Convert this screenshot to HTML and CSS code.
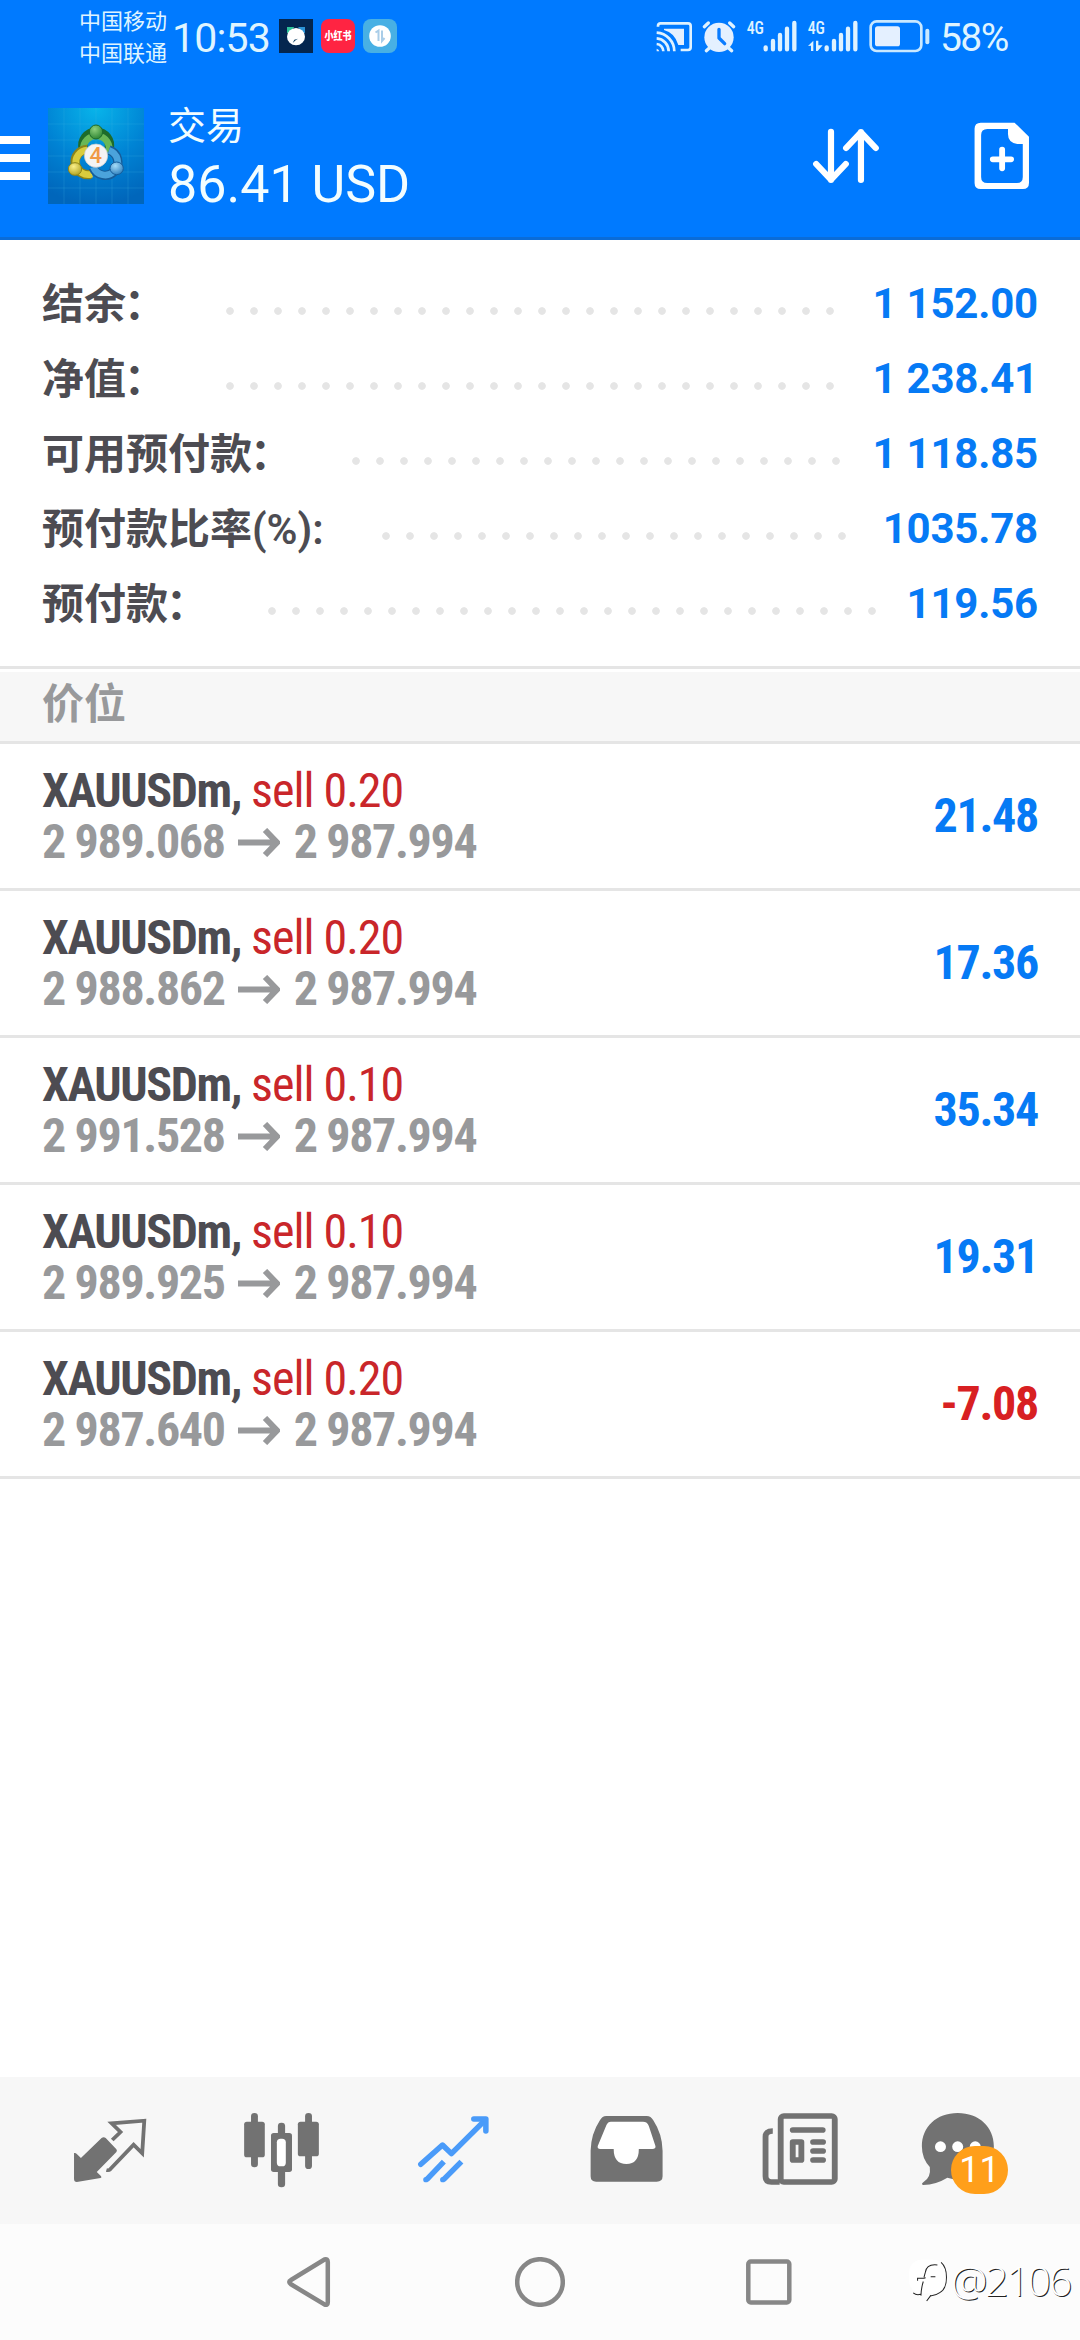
FILE: index.html
```html
<!DOCTYPE html>
<html lang="zh-CN">
<head>
<meta charset="utf-8">
<title>交易</title>
<link rel="stylesheet" href="styles.css">
</head>
<body>
<div class="screen">
  <header class="header">
    <div class="status">
      <div class="carriers"><div>中国移动</div><div>中国联通</div></div>
      <div class="clock">10:53</div>
      <div class="apps">
        <svg class="app" viewBox="27 27 102 102" preserveAspectRatio="none">
          <rect x="27" y="27" width="102" height="102" fill="#04264f"/>
          <path d="M51 51h22l-15 18h-7z" fill="#2fc39b"/><path d="M105 51H84l15 18h6z" fill="#2b93d6"/>
          <ellipse cx="78" cy="80" rx="27" ry="26" fill="#fff"/>
          <path d="M84 86l-7 5-9 8 5-10z" fill="#0b3d63"/>
        </svg>
        <svg class="app" viewBox="0 0 34 34">
          <rect width="34" height="34" rx="8" fill="#ff2442"/>
          <text x="17" y="21" text-anchor="middle" textLength="27" lengthAdjust="spacingAndGlyphs" class="app-label">小红书</text>
        </svg>
        <svg class="app" viewBox="0 0 34 34">
          <rect width="34" height="34" rx="8" fill="#48b0e4"/>
          <circle cx="17" cy="17" r="10.8" fill="#fff"/>
          <path d="M12.5 13.5l3-2V22M19 11.5V22l2.5-3" fill="none" stroke="#a9cde8" stroke-width="2"/>
        </svg>
      </div>
      <svg class="indicators" viewBox="0 0 855 150">
        <g fill="none" stroke="#dff2ff" stroke-width="8">
          <path d="M24 50v-2q0-8 8-8h82q8 0 8 8v64q0 8-8 8H92"/>
          <path d="M20 68a56 56 0 0 1 53 56M20 85a39 39 0 0 1 36 39M20 102a22 22 0 0 1 20 22"/>
        </g>
        <path d="M42 56h60v49H85Q74 68 42 60zM20 116a10 10 0 0 1 8 8h-8z" fill="#e4f0ff"/>
        <circle cx="207" cy="82" r="44" fill="#e4f0ff"/>
        <path d="M163 50l12-11M251 50l-12-11M169 122l10-9M245 122l-10-9" stroke="#dff2ff" stroke-width="10" stroke-linecap="round"/>
        <path d="M207 58v26l17 17" fill="none" stroke="#0a7cff" stroke-width="10" stroke-linecap="round" stroke-linejoin="round"/>
        <text x="290" y="73" class="net" textLength="52" lengthAdjust="spacingAndGlyphs">4G</text>
        <text x="473" y="73" class="net" textLength="52" lengthAdjust="spacingAndGlyphs">4G</text>
        <g stroke="#dff2ff" stroke-width="13" stroke-linecap="round">
          <path d="M347 112v6M369 93v25M390 75v43M411 56v62M433 39v79"/>
          <path d="M530 112v6M552 93v25M573 75v43M594 56v62M616 39v79"/>
        </g>
        <path d="M474 108l16-16v31h-7v-16zM498 92h7v14h13l-15 17h-5z" fill="#dff2ff"/>
        <rect x="662" y="34" width="152" height="89" rx="18" fill="none" stroke="#c9e8ff" stroke-width="8"/>
        <rect x="675" y="49" width="75" height="60" rx="8" fill="#e4f0ff"/>
        <path d="M832 62v35" stroke="#c9e8ff" stroke-width="12" stroke-linecap="round"/>
      </svg>
      <div class="battery-level">58%</div>
    </div>
    <div class="toolbar">
      <div class="menu"><i></i><i></i><i></i></div>
      <svg class="logo" viewBox="24 24 288 288">
        <defs>
          <radialGradient id="sky" cx=".5" cy="0" r="1"><stop offset="0" stop-color="#08b4ea"/><stop offset=".55" stop-color="#0083d4"/><stop offset="1" stop-color="#0066bb"/></radialGradient>
          <radialGradient id="green" cx=".4" cy=".3" r=".8"><stop offset="0" stop-color="#8ed07c"/><stop offset="1" stop-color="#237d2c"/></radialGradient>
          <radialGradient id="gold" cx=".4" cy=".3" r=".8"><stop offset="0" stop-color="#fbf08a"/><stop offset="1" stop-color="#a99b16"/></radialGradient>
          <radialGradient id="azure" cx=".4" cy=".3" r=".8"><stop offset="0" stop-color="#a5dcf8"/><stop offset="1" stop-color="#2377b8"/></radialGradient>
        </defs>
        <rect x="24" y="24" width="288" height="288" fill="url(#sky)"/>
        <path d="M72 24v288M120 24v288M168 24v288M216 24v288M264 24v288M24 72h288M24 120h288M24 168h288M24 216h288M24 264h288" stroke="#45b4ea" stroke-opacity=".22" stroke-width="3"/>
        <path d="M130 147a40 40 0 1 1 77 0" fill="none" stroke="#1d6b2b" stroke-width="28"/>
        <path d="M130 150a39 39 0 1 1 76 8" fill="none" stroke="#69b756" stroke-width="20"/>
        <path d="M142 148a38 38 0 1 0 10 75" fill="none" stroke="#8c8419" stroke-width="28"/>
        <path d="M142 150a37 37 0 1 0 14 72" fill="none" stroke="#d9cc3d" stroke-width="20"/>
        <path d="M207 150a39 39 0 1 1-48 53" fill="none" stroke="#165d9a" stroke-width="28"/>
        <path d="M207 151a38 38 0 1 1-47 50" fill="none" stroke="#4ba3dc" stroke-width="20"/>
        <ellipse cx="168" cy="96" rx="20" ry="21" fill="url(#green)" stroke="#1d6b2b" stroke-width="3"/>
        <ellipse cx="105" cy="207" rx="20" ry="19" fill="url(#gold)" stroke="#8c8419" stroke-width="3"/>
        <ellipse cx="230" cy="205" rx="20" ry="19" fill="url(#azure)" stroke="#165d9a" stroke-width="3"/>
        <circle cx="168" cy="167" r="35" fill="#f4f4f4" stroke="#c9c9c9" stroke-width="2"/>
        <text x="167" y="190" text-anchor="middle" class="logo-digit">4</text>
      </svg>
      <div class="titles"><div class="title">交易</div><div class="profit">86.41 USD</div></div>
      <svg class="actions" viewBox="755 330 697 270" preserveAspectRatio="none">
        <g fill="none" stroke="#fff" stroke-width="18" stroke-linecap="round" stroke-linejoin="round">
          <path d="M845 395v145M802 492l43 47 43-47M932 540V396M889 444l43-47 43 47"/>
        </g>
        <path fill="#fff" fill-rule="evenodd" d="M1280 368h98l42 42v139q0 18-18 18h-122q-18 0-18-18V386q0-18 18-18zM1299 387q-18 0-18 18v126q0 18 18 18h86q17 0 17-18v-99h-16q-27-4-27-30v-15z"/>
        <path d="M1315 478h53M1342 449v56" stroke="#fff" stroke-width="17" stroke-linecap="round"/>
      </svg>
    </div>
  </header>

  <section class="summary">
    <div class="entry"><span class="name">结余<span class="colon">：</span></span><i class="dots dots-26"></i><b>1 152.00</b></div>
    <div class="entry"><span class="name">净值<span class="colon">：</span></span><i class="dots dots-26"></i><b>1 238.41</b></div>
    <div class="entry"><span class="name">可用预付款<span class="colon">：</span></span><i class="dots dots-21"></i><b>1 118.85</b></div>
    <div class="entry"><span class="name">预付款比率<span class="unit">(%):</span></span><i class="dots dots-20"></i><b>1035.78</b></div>
    <div class="entry"><span class="name">预付款<span class="colon">：</span></span><i class="dots dots-26"></i><b>119.56</b></div>
  </section>

  <div class="section-title">价位</div>

  <main class="positions">
    <div class="position">
      <div class="deal"><div><b class="symbol">XAUUSDm,</b><span class="side">sell 0.20</span></div>
      <div class="prices"><span>2 989.068</span><svg class="arrow" viewBox="0 0 42 29"><path d="M0 14.5H38M27 2l12 12.5L27 27" /></svg><span>2 987.994</span></div></div>
      <div class="result">21.48</div>
    </div>
    <div class="position">
      <div class="deal"><div><b class="symbol">XAUUSDm,</b><span class="side">sell 0.20</span></div>
      <div class="prices"><span>2 988.862</span><svg class="arrow" viewBox="0 0 42 29"><path d="M0 14.5H38M27 2l12 12.5L27 27" /></svg><span>2 987.994</span></div></div>
      <div class="result">17.36</div>
    </div>
    <div class="position">
      <div class="deal"><div><b class="symbol">XAUUSDm,</b><span class="side">sell 0.10</span></div>
      <div class="prices"><span>2 991.528</span><svg class="arrow" viewBox="0 0 42 29"><path d="M0 14.5H38M27 2l12 12.5L27 27" /></svg><span>2 987.994</span></div></div>
      <div class="result">35.34</div>
    </div>
    <div class="position">
      <div class="deal"><div><b class="symbol">XAUUSDm,</b><span class="side">sell 0.10</span></div>
      <div class="prices"><span>2 989.925</span><svg class="arrow" viewBox="0 0 42 29"><path d="M0 14.5H38M27 2l12 12.5L27 27" /></svg><span>2 987.994</span></div></div>
      <div class="result">19.31</div>
    </div>
    <div class="position">
      <div class="deal"><div><b class="symbol">XAUUSDm,</b><span class="side">sell 0.20</span></div>
      <div class="prices"><span>2 987.640</span><svg class="arrow" viewBox="0 0 42 29"><path d="M0 14.5H38M27 2l12 12.5L27 27" /></svg><span>2 987.994</span></div></div>
      <div class="result loss">-7.08</div>
    </div>
  </main>

  <nav class="tabs">
    <svg class="tab" viewBox="69.7 21 499.5 441" preserveAspectRatio="none">
      <path fill="#727272" d="M215 249q5-1 8 3l12 12 60-60q6-5 12 0l31 34q3 4 0 8l-57 60 12 12q4 4-1 6l-69 12q-8 0-8-9z"/>
      <path fill="none" stroke="#727272" stroke-width="11" d="M326 210l24-24-26-26 95-8-6 98-25-26-68 74q-4 4-11 2"/>
    </svg>
    <svg class="tab" viewBox="569.2 21 499.5 441" preserveAspectRatio="none">
      <g fill="#727272">
        <rect x="729" y="129" width="20" height="163" rx="10"/><rect x="709" y="155" width="60" height="107" rx="8"/>
        <rect x="886" y="129" width="20" height="168" rx="10"/><rect x="865" y="155" width="61" height="104" rx="8"/>
        <rect x="807" y="158" width="21" height="50" rx="10"/><rect x="807" y="290" width="21" height="62" rx="10"/>
        <rect x="787" y="189" width="61" height="117" rx="8"/>
      </g>
      <rect x="804" y="206" width="26" height="83" rx="11" fill="#fff"/>
    </svg>
    <svg class="tab" viewBox="1068.7 21 499.5 441" preserveAspectRatio="none">
      <g fill="none" stroke="#4a9bf9" stroke-width="16">
        <path stroke-linecap="round" stroke-linejoin="round" d="M1222 283l63-58 26 26 97-100"/>
        <path stroke-linecap="round" stroke-linejoin="round" d="M1376 147h35v36"/>
        <path stroke-linejoin="miter" d="M1289 275l-50 54M1340 275l-52 54"/>
      </g>
      <circle cx="1237" cy="329" r="8" fill="#4a9bf9"/><circle cx="1286" cy="329" r="8" fill="#4a9bf9"/>
    </svg>
    <svg class="tab" viewBox="0 21 499.5 441" preserveAspectRatio="none">
      <path fill="#727272" d="M192 138h118q12 0 19 13 26 41 27 91v77q0 16-17 16H163q-16 0-16-16v-77q1-50 27-91 7-13 18-13z"/>
      <path fill="#fff" d="M206 155q-9 0-13 10l-25 62q-3 9 7 10h39q0 45 37 45 36 0 36-45h39q12-1 9-10l-19-59q-4-13-17-13z"/>
    </svg>
    <svg class="tab" viewBox="499.5 21 499.5 441" preserveAspectRatio="none">
      <g fill="none" stroke="#727272">
        <rect x="699" y="138" width="157" height="198" rx="9" stroke-width="17"/>
        <path d="M676 183q-21 0-21 17v119q0 17 17 17h24" stroke-width="17"/>
        <path d="M734 180h87M793 216h29M793 243h29M793 270h29" stroke-width="17" stroke-linecap="round"/>
        <rect x="734" y="216" width="25" height="54" stroke-width="17" stroke-linejoin="round"/>
      </g>
    </svg>
    <div class="tab messages">
      <svg class="tab" viewBox="999 21 499.5 441" preserveAspectRatio="none">
        <path fill="#727272" d="M1213 129c62 0 105 42 105 100s-43 100-98 100q-20 0-37-6-33 21-70 22-8-2 1-9 22-14 18-45-23-25-23-62c0-58 42-100 104-100z"/>
        <circle cx="1163" cy="230" r="16" fill="#fff"/><circle cx="1213" cy="230" r="16" fill="#fff"/><circle cx="1264" cy="230" r="16" fill="#fff"/>
      </svg>
      <span class="badge">11</span>
    </div>
  </nav>

  <footer class="system">
    <svg class="back" viewBox="0 0 44 50"><path d="M37.5 2.5L4 23q-3.500 2 0 4.300L37.500 47.500q3.300 1 3.300-2V5q0-3.500-3.300-2.500z"/></svg>
    <svg class="home" viewBox="0 0 50 50"><circle cx="25" cy="25" r="22.800"/></svg>
    <svg class="recent" viewBox="0 0 46 46"><rect x="2.300" y="2.500" width="41" height="41" rx="2.500"/></svg>
    <div class="watermark">
      <svg viewBox="20 55 115 128"><rect x="20" y="57" width="108" height="100" rx="36" fill="#fff"/>
        <path d="M115 65q16 14 16 44 0 36-20 46-14 10-27 9l-12 16M104 73q-32-4-36 22l-4 15M45 120v-8h19l5-1M84 108h14M62 122q-6 18-7 42M32 156q10 8 22 4"/></svg>
      <span>@2106</span>
    </div>
  </footer>
</div>
</body>
</html>
```
FILE: styles.css
```css
* { box-sizing: border-box; }
body { margin: 0; background: #fff; font-family: Roboto, "Noto Sans CJK SC", sans-serif; }
svg { display: block; flex: none; }
.screen { width: 1080px; height: 2340px; display: flex; flex-direction: column; overflow: hidden; }

.header { height: 240px; background: #007aff; border-bottom: 3px solid #0a6cd8; color: #f2fdff; }
.status { height: 72px; display: flex; padding-left: 79px; color: #dff4ff; }
.carriers { width: 93px; padding-top: 6px; font-size: 22px; line-height: 32px; white-space: nowrap; }
.clock { width: 107px; font-size: 41px; line-height: 77px; letter-spacing: -0.8px; }
.apps { display: flex; gap: 8px; padding-top: 19px; width: 371px; }
.app { width: 34px; height: 34px; overflow: visible; }
.app-label { font-size: 11px; font-weight: 900; fill: #fff; }
.indicators { width: 285px; height: 50px; margin-top: 10px; }
.net { font-family: "Roboto Condensed", Roboto, sans-serif; font-size: 54px; font-weight: 500; fill: #dff2ff; }
.battery-level { margin-left: 5px; font-size: 39px; line-height: 77px; letter-spacing: -1.6px; }

.toolbar { height: 165px; display: flex; }
.menu { width: 48px; padding-top: 64px; display: flex; flex-direction: column; gap: 10px; }
.menu i { width: 30px; height: 8px; background: #fff; }
.logo { width: 96px; height: 96px; margin-top: 36px; }
.logo-digit { font-size: 66px; font-weight: 500; fill: #f09a45; }
.titles { width: 656px; padding: 31px 0 0 24px; }
.title { font-size: 38px; line-height: 46px; }
.profit { margin-top: 4px; font-size: 52px; line-height: 64px; }
.actions { width: 240px; height: 90px; margin-top: 38px; }

.summary { padding: 26px 42px 25px; border-bottom: 3px solid #e5e5e5; }
.entry { height: 75px; display: flex; font-size: 42px; line-height: 75px; font-weight: 700; color: #4d4c52; }
.name { padding-top: 1px; }
.colon { margin: 0 2px 0 -2px; }
.unit { font-weight: 600; }
.entry b { margin-left: auto; color: #067af5; font-weight: 700; letter-spacing: -0.2px; }
.dots { height: 24px; margin: 33px 0 0 50px; background: radial-gradient(circle at 12px 12px, #e5e5e5 3.4px, transparent 4.2px) 0 0 / 24px 24px repeat-x; }
.dots-26 { width: 624px; }
.dots-21 { width: 504px; }
.dots-20 { width: 480px; }

.section-title { height: 72px; margin-top: 3px; padding-left: 42px; background: #f7f7f7; border-bottom: 3px solid #e5e5e5; color: #98999b; font-size: 42px; line-height: 65px; font-weight: 700; }

.positions { flex: 1; font-family: "Roboto Condensed", Roboto, sans-serif; font-stretch: 75%; font-size: 48px; }
.position { height: 147px; padding: 0 42px; display: flex; justify-content: space-between; border-bottom: 3px solid #e5e5e5; }
.deal { padding-top: 21px; line-height: 51px; white-space: nowrap; }
.deal > div { display: flex; }
.symbol { width: 209px; color: #4d4c52; letter-spacing: -1.4px; }
.side { color: #c9262a; letter-spacing: -1px; }
.prices { color: #98999b; font-weight: 700; letter-spacing: -1.35px; }
.arrow { width: 42px; height: 29px; margin: 12px 14px 0 13px; fill: none; stroke: #98999b; stroke-width: 6; }
.result { font-weight: 700; line-height: 144px; color: #067af5; letter-spacing: -1.3px; }
.loss { color: #d82022; }

.tabs { height: 147px; padding: 0 24px; display: flex; background: #f7f7f7; }
.tab { width: 172px; height: 147px; flex: none; }
.messages { position: relative; }
.badge { position: absolute; left: 67px; top: 69px; width: 57px; height: 48px; border-radius: 24px; background: #ff9f1a; color: #fff; font-size: 36px; line-height: 49px; text-align: center; }

.system { height: 116px; display: flex; align-items: flex-start; background: #fcfcfc; fill: none; }
.system svg { stroke: #878787; stroke-width: 4.5; }
.back { width: 44px; height: 50px; margin: 33px 0 0 287px; }
.home { width: 50px; height: 50px; margin: 33px 0 0 184px; }
.recent { width: 46px; height: 46px; margin: 35px 0 0 181px; }
.watermark { display: flex; margin: 28px 0 0 117px; white-space: nowrap; }
.watermark svg { width: 39px; height: 43px; margin-top: 7px; stroke: #222; stroke-width: 3; }
.watermark svg rect { stroke: none; }
.watermark span { margin-left: 3px; font-family: "Open Sans", "Noto Sans", sans-serif; font-weight: 300; font-size: 41px; line-height: 56px; letter-spacing: -2.2px; color: #fff; text-shadow: 1px 1px 0 #222; }
```
